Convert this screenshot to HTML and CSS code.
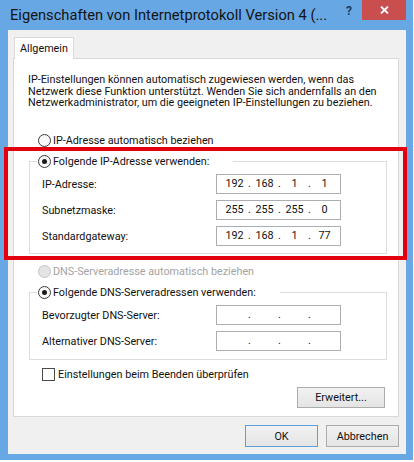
FILE: index.html
```html
<!DOCTYPE html>
<html lang="de">
<head>
  <meta charset="UTF-8">
  <meta name="viewport" content="width=device-width, initial-scale=1.0">
  <title>Eigenschaften von Internetprotokoll Version 4</title>
  <link rel="stylesheet" href="styles.css">
</head>
<body>
  <div class="window">
    <div class="titlebar">
      <span class="title">Eigenschaften von Internetprotokoll Version 4 (...</span>
      <span class="help">?</span>
      <span class="close">
        <svg width="9" height="8" viewBox="0 0 9 8"><path d="M1 0.5 L8 7.5 M8 0.5 L1 7.5" stroke="#fff" stroke-width="1.8" fill="none"/></svg>
      </span>
    </div>

    <div class="client">
      <div class="tabs">
        <div class="tab">Allgemein</div>
      </div>

      <div class="panel">
        <p class="intro">
          IP-Einstellungen können automatisch zugewiesen werden, wenn das<br>
          Netzwerk diese Funktion unterstützt. Wenden Sie sich andernfalls an den<br>
          Netzwerkadministrator, um die geeigneten IP-Einstellungen zu beziehen.
        </p>

        <div class="option first"><span class="radio"></span>IP-Adresse automatisch beziehen</div>

        <fieldset class="group">
          <legend class="option"><span class="radio checked"></span>Folgende IP-Adresse verwenden:</legend>
          <div class="field">
            <span class="field-label">IP-Adresse:</span>
            <span class="ip"><span class="seg">192</span><span class="dot">.</span><span class="seg">168</span><span class="dot">.</span><span class="seg">1</span><span class="dot">.</span><span class="seg">1</span></span>
          </div>
          <div class="field">
            <span class="field-label">Subnetzmaske:</span>
            <span class="ip"><span class="seg">255</span><span class="dot">.</span><span class="seg">255</span><span class="dot">.</span><span class="seg">255</span><span class="dot">.</span><span class="seg">0</span></span>
          </div>
          <div class="field">
            <span class="field-label">Standardgateway:</span>
            <span class="ip"><span class="seg">192</span><span class="dot">.</span><span class="seg">168</span><span class="dot">.</span><span class="seg">1</span><span class="dot">.</span><span class="seg">77</span></span>
          </div>
        </fieldset>

        <div class="option disabled dns-auto"><span class="radio"></span>DNS-Serveradresse automatisch beziehen</div>

        <fieldset class="group dns">
          <legend class="option"><span class="radio checked"></span>Folgende DNS-Serveradressen verwenden:</legend>
          <div class="field">
            <span class="field-label">Bevorzugter DNS-Server:</span>
            <span class="ip"><span class="seg"></span><span class="dot">.</span><span class="seg"></span><span class="dot">.</span><span class="seg"></span><span class="dot">.</span><span class="seg"></span></span>
          </div>
          <div class="field">
            <span class="field-label">Alternativer DNS-Server:</span>
            <span class="ip"><span class="seg"></span><span class="dot">.</span><span class="seg"></span><span class="dot">.</span><span class="seg"></span><span class="dot">.</span><span class="seg"></span></span>
          </div>
        </fieldset>

        <div class="check-row"><span class="checkbox"></span>Einstellungen beim Beenden überprüfen</div>

        <div class="advanced">
          <button class="btn advanced-btn">Erweitert...</button>
        </div>
      </div>

      <div class="footer">
        <button class="btn default">OK</button>
        <button class="btn">Abbrechen</button>
      </div>
    </div>

    <!-- red marker around the static IP block -->
    <div class="highlight"></div>
  </div>
</body>
</html>
```

FILE: styles.css
```css
body {
  margin: 0;
  background: #fff;
  font-family: 'Roboto', 'Liberation Sans', sans-serif;
  font-size: 10.8px;
  color: #111;
}

.window {
  position: relative;
  width: 413px;
  height: 460px;
  background: #66a7e4;
  display: flex;
  flex-direction: column;
}

/* Title bar */
.titlebar {
  height: 30px;
  display: flex;
  align-items: flex-start;
  flex-shrink: 0;
}

.title {
  flex: 1;
  padding-left: 10px;
  font-size: 14.7px;
  line-height: 30px;
  color: #141414;
  white-space: nowrap;
}

.help {
  width: 26px;
  text-align: center;
  font-size: 12px;
  font-weight: bold;
  line-height: 22px;
  color: #1d3b5f;
}

.close {
  width: 44px;
  height: 20px;
  margin-right: 7px;
  background: #c94f4f;
  display: flex;
  align-items: center;
  justify-content: center;
}

/* Client area */
.client {
  flex: 1;
  margin: 0 7px 6px 8px;
  background: #f0f0f0;
  display: flex;
  flex-direction: column;
}

.tabs {
  margin-top: 7px;
  padding-left: 6px;
  display: flex;
}

.tab {
  position: relative;
  z-index: 1;
  width: 60px;
  height: 22px;
  margin-bottom: -1px;
  box-sizing: border-box;
  border: 1px solid #d9d9d9;
  border-bottom: none;
  background: #fff;
  text-align: center;
  line-height: 21px;
}

.panel {
  margin: 0 7px 0 5px;
  padding-bottom: 8px;
  background: #fff;
  border: 1px solid #d9d9d9;
}

.intro {
  margin: 15px 0 0 14px;
  line-height: 11.7px;
  white-space: nowrap;
}

/* Radio buttons and checkbox */
.option {
  display: flex;
  align-items: center;
  gap: 2px;
  height: 16px;
  white-space: nowrap;
}

.option.first {
  margin: 23px 0 0 24px;
}

.radio {
  position: relative;
  width: 13px;
  height: 13px;
  box-sizing: border-box;
  border: 1px solid #3a3a3a;
  border-radius: 50%;
  background: linear-gradient(#f4f4f4, #fff);
}

.radio.checked::after {
  content: '';
  position: absolute;
  left: 3px;
  top: 3px;
  width: 5px;
  height: 5px;
  border-radius: 50%;
  background: #1a1a1a;
}

.option.disabled {
  color: #a3a3a3;
}

.option.disabled .radio {
  border-color: #c4c4c4;
  background: #e4e4e4;
}

.dns-auto {
  margin: 9px 0 0 24px;
}

/* Group boxes */
.group {
  width: 358px;
  box-sizing: border-box;
  min-width: 0;
  margin: 5px 0 0 15px;
  padding: 5px 12px 7px;
  border: 1px solid #dcdcdc;
  display: flex;
  flex-direction: column;
  gap: 6px;
}

.group.dns {
  padding-bottom: 8px;
}

.group legend {
  margin-left: -5px;
  padding: 0 24px 0 1px;
}

.field {
  display: flex;
  align-items: center;
  height: 20px;
}

.field-label {
  width: 174px;
}

.ip {
  width: 125px;
  height: 20px;
  box-sizing: border-box;
  padding-left: 7px;
  border: 1px solid #abadb3;
  background: #fff;
  display: flex;
  line-height: 18px;
}

.seg {
  width: 21px;
  text-align: center;
}

.dot {
  width: 9px;
  text-align: center;
}

.check-row {
  margin: 6px 0 0 28px;
  height: 16px;
  display: flex;
  align-items: center;
  gap: 3px;
}

.checkbox {
  width: 13px;
  height: 13px;
  box-sizing: border-box;
  border: 1px solid #4a4a4a;
  background: #fff;
}

/* Buttons */
.btn {
  font-family: inherit;
  font-size: 10.8px;
  color: #111;
  width: 73px;
  height: 22px;
  padding: 0;
  border: 1px solid #acacac;
  background: linear-gradient(#f2f2f2, #e4e4e4);
}

.btn.default {
  border-color: #5c9fdc;
}

.advanced {
  margin-top: 5px;
  padding-right: 13px;
  display: flex;
  justify-content: flex-end;
}

.advanced-btn {
  width: 88px;
  height: 21px;
}

.footer {
  margin-top: 8px;
  padding-right: 7px;
  display: flex;
  justify-content: flex-end;
  gap: 8px;
}

.highlight {
  position: absolute;
  left: 4px;
  top: 147px;
  width: 403px;
  height: 113px;
  box-sizing: border-box;
  border: 4px solid #e2000e;
}
```
